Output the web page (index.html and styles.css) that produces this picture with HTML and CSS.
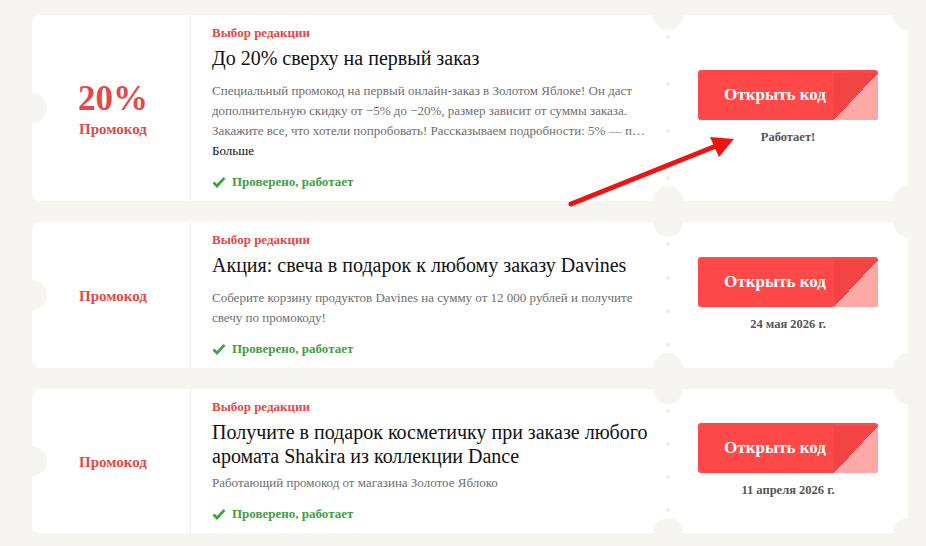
FILE: index.html
```html
<!DOCTYPE html>
<html lang="ru">
<head>
<meta charset="utf-8">
<title>Промокоды</title>
<link rel="stylesheet" href="styles.css">
</head>
<body>
<div class="list">
  <div class="card">
    <div class="side">
      <div class="pct">20%</div>
      <div class="kind">Промокод</div>
    </div>
    <div class="main">
      <div class="label">Выбор редакции</div>
      <div class="title">До 20% сверху на первый заказ</div>
      <div class="desc clamp">Специальный промокод на первый онлайн-заказ в Золотом Яблоке! Он даст дополнительную скидку от −5% до −20%, размер зависит от суммы заказа. Закажите все, что хотели попробовать! Рассказываем подробности: 5% — при заказе от 3 000 рублей, 10% — от 5 000 рублей.</div>
      <div class="more">Больше</div>
      <div class="check"><svg width="14" height="12" viewBox="0 0 14 12"><path d="M1.5 6.5 L5 10 L12.5 1.8" fill="none" stroke="#3f9e3f" stroke-width="2.6"/></svg>Проверено, работает</div>
    </div>
    <div class="dots"><i></i><i></i><i></i><i></i></div>
    <div class="stub">
      <div class="btn"><span>Открыть код</span><b class="fold"></b></div>
      <div class="note">Работает!</div>
    </div>
  </div>

  <div class="card">
    <div class="side">
      <div class="kind">Промокод</div>
    </div>
    <div class="main">
      <div class="label">Выбор редакции</div>
      <div class="title">Акция: свеча в подарок к любому заказу Davines</div>
      <div class="desc">Соберите корзину продуктов Davines на сумму от 12 000 рублей и получите свечу по промокоду!</div>
      <div class="check"><svg width="14" height="12" viewBox="0 0 14 12"><path d="M1.5 6.5 L5 10 L12.5 1.8" fill="none" stroke="#3f9e3f" stroke-width="2.6"/></svg>Проверено, работает</div>
    </div>
    <div class="dots"><i></i><i></i><i></i><i></i></div>
    <div class="stub">
      <div class="btn"><span>Открыть код</span><b class="fold"></b></div>
      <div class="note">24 мая 2026 г.</div>
    </div>
  </div>

  <div class="card">
    <div class="side">
      <div class="kind">Промокод</div>
    </div>
    <div class="main">
      <div class="label">Выбор редакции</div>
      <div class="title">Получите в подарок косметичку при заказе любого аромата Shakira из коллекции Dance</div>
      <div class="desc tight">Работающий промокод от магазина Золотое Яблоко</div>
      <div class="check"><svg width="14" height="12" viewBox="0 0 14 12"><path d="M1.5 6.5 L5 10 L12.5 1.8" fill="none" stroke="#3f9e3f" stroke-width="2.6"/></svg>Проверено, работает</div>
    </div>
    <div class="dots"><i></i><i></i><i></i><i></i></div>
    <div class="stub">
      <div class="btn"><span>Открыть код</span><b class="fold"></b></div>
      <div class="note">11 апреля 2026 г.</div>
    </div>
  </div>
</div>

<svg class="arrow" width="926" height="546" viewBox="0 0 926 546">
  <line x1="571" y1="204" x2="716" y2="146" stroke="#ee1414" stroke-width="5" stroke-linecap="round"/>
  <polygon points="734,139 710,137 719,157" fill="#ee1414"/>
</svg>
</body>
</html>
```

FILE: styles.css
```css
* { box-sizing: border-box; }

html, body { margin: 0; }

body {
  background: #f6f5f0;
  font-family: "Liberation Serif", "Times New Roman", serif;
  width: 926px;
  height: 546px;
  overflow: hidden;
  position: relative;
}

.list {
  display: flex;
  flex-direction: column;
  gap: 21px;
  padding: 15px 18px 0 32px;
}

.card {
  display: grid;
  grid-template-columns: 159px 1fr 4px 238px;
  border-radius: 8px;
  background:
    radial-gradient(circle at 0 50%, #f6f5f0 14.5px, transparent 15.5px),
    radial-gradient(circle at 636px 0, #f6f5f0 14.5px, transparent 15.5px),
    radial-gradient(circle at 636px 100%, #f6f5f0 14.5px, transparent 15.5px),
    radial-gradient(circle at 100% 0, #f6f5f0 14.5px, transparent 15.5px),
    radial-gradient(circle at 100% 100%, #f6f5f0 14.5px, transparent 15.5px),
    #fff;
}

.side {
  border-right: 1px solid #f0efeb;
  display: flex;
  flex-direction: column;
  align-items: center;
  justify-content: center;
  color: #e04a4a;
  font-weight: bold;
  padding: 1px 0 0 4px;
}

.pct {
  font-size: 35px;
  line-height: 40px;
}

.kind {
  font-size: 15px;
  line-height: 20px;
}

.main {
  display: flex;
  flex-direction: column;
  padding: 9px 14px 9px 21px;
}

.label {
  color: #e04a4a;
  font-weight: bold;
  font-size: 13px;
  line-height: 18px;
}

.title {
  color: #111;
  font-size: 20px;
  line-height: 24px;
  margin-top: 4px;
}

.desc {
  color: #6e6e6e;
  font-size: 13px;
  line-height: 20px;
  margin-top: 11px;
  padding-right: 6px;
}

.desc.tight {
  margin-top: 5px;
}

.clamp {
  display: -webkit-box;
  -webkit-line-clamp: 3;
  -webkit-box-orient: vertical;
  overflow: hidden;
}

.more {
  color: #111;
  font-size: 13px;
  line-height: 20px;
}

.check {
  display: flex;
  align-items: center;
  gap: 6px;
  color: #3f9e3f;
  font-weight: bold;
  font-size: 13px;
  line-height: 20px;
  margin-top: 11px;
}

.dots {
  display: flex;
  flex-direction: column;
  justify-content: space-between;
  align-items: center;
  padding: 20px 0 21px;
}

.dots i {
  display: block;
  width: 4px;
  height: 4px;
  border-radius: 50%;
  background: #eeede8;
}

.stub {
  display: flex;
  flex-direction: column;
  align-items: center;
  justify-content: center;
  padding-right: 2px;
}

.btn {
  position: relative;
  width: 180px;
  height: 50px;
  background: #ff4848;
  border-radius: 3px;
  color: #fff;
  font-weight: bold;
  font-size: 17px;
  display: flex;
  align-items: center;
  justify-content: center;
  padding-right: 26px;
  overflow: hidden;
}

.fold {
  position: absolute;
  right: 0;
  top: 3px;
  bottom: 0;
  width: 44px;
  background: linear-gradient(to bottom right, #f24444 50%, #ffa8a8 50%);
}

.note {
  margin-top: 9px;
  color: #555;
  font-weight: bold;
  font-size: 12.5px;
  line-height: 17px;
}

.arrow {
  position: absolute;
  left: 0;
  top: 0;
  pointer-events: none;
}
```
